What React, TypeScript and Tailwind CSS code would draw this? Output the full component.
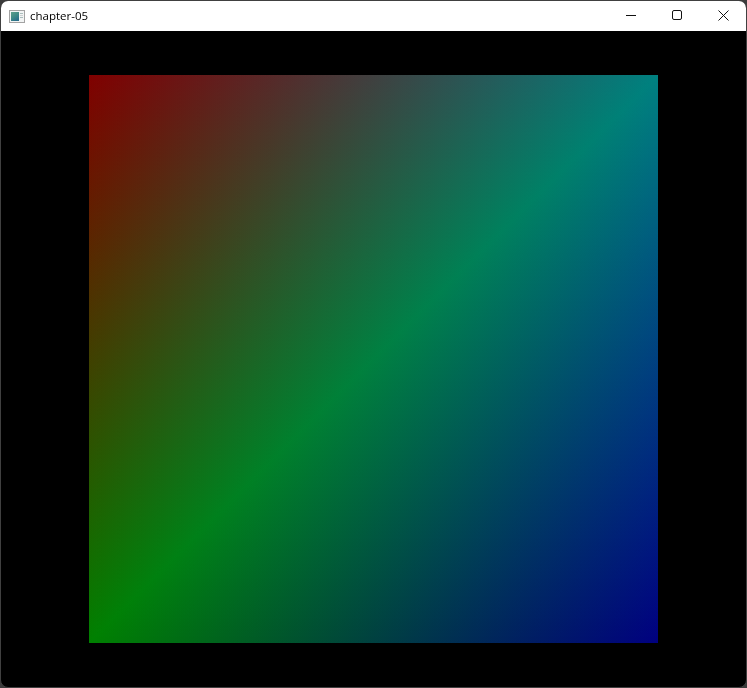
function AppIcon() {
  return (
    <svg width="16" height="13" viewBox="0 0 16 13" className="shrink-0">
      <defs>
        <linearGradient id="icon-fill" x1="0" y1="0" x2="0.6" y2="1">
          <stop offset="0" stopColor="#5f9f8c" />
          <stop offset="0.55" stopColor="#3f8a86" />
          <stop offset="1" stopColor="#2a6f8a" />
        </linearGradient>
      </defs>
      <rect x="0.5" y="0.5" width="15" height="12" fill="#f2f4f4" stroke="#a3a3a3" />
      <rect x="2" y="2" width="8" height="9" fill="url(#icon-fill)" />
      <rect x="11" y="3" width="3" height="1" fill="#a9bcbc" />
      <rect x="11" y="5" width="3" height="1" fill="#cdd2d2" />
      <rect x="11" y="7" width="3" height="1" fill="#a9bcbc" />
    </svg>
  );
}

function TitleButtons() {
  return (
    <div className="flex h-full pb-[2px]">
      <div className="w-[46px] flex items-center justify-center">
        <svg width="10" height="10" viewBox="0 0 10 10">
          <path d="M0 5.5H10" stroke="#111" fill="none" />
        </svg>
      </div>
      <div className="w-[46px] flex items-center justify-center">
        <svg width="10" height="10" viewBox="0 0 10 10">
          <rect x="0.5" y="0.5" width="9" height="9" rx="1.5" stroke="#111" fill="none" />
        </svg>
      </div>
      <div className="w-[46px] flex items-center justify-center">
        <svg width="11" height="11" viewBox="0 0 11 11">
          <path d="M0.5 0.5L10.5 10.5M10.5 0.5L0.5 10.5" stroke="#111" fill="none" />
        </svg>
      </div>
    </div>
  );
}

// vertex colours are added up per triangle, like the interpolated quad from the GL sample
function Quad() {
  const w = 569;
  const h = 568;
  return (
    <svg width={w} height={h} viewBox={`0 0 ${w} ${h}`} className="block isolate" shapeRendering="crispEdges">
      <defs>
        <linearGradient id="tl" gradientUnits="userSpaceOnUse" x1="0" y1="0" x2={w / 2} y2={h / 2}>
          <stop offset="0" stopColor="#800000" />
          <stop offset="1" stopColor="#000000" />
        </linearGradient>
        <linearGradient id="tr-a" gradientUnits="userSpaceOnUse" x1="0" y1="0" x2={w} y2="0">
          <stop offset="0" stopColor="#000000" />
          <stop offset="1" stopColor="#008080" />
        </linearGradient>
        <linearGradient id="bl-a" gradientUnits="userSpaceOnUse" x1="0" y1="0" x2="0" y2={h}>
          <stop offset="0" stopColor="#000000" />
          <stop offset="1" stopColor="#008000" />
        </linearGradient>
        <linearGradient id="br" gradientUnits="userSpaceOnUse" x1={w / 2} y1={h / 2} x2={w} y2={h}>
          <stop offset="0" stopColor="#000000" />
          <stop offset="1" stopColor="#000080" />
        </linearGradient>
        <linearGradient id="tr-b" gradientUnits="userSpaceOnUse" x1="0" y1="0" x2="0" y2={h}>
          <stop offset="0" stopColor="#008080" />
          <stop offset="1" stopColor="#000000" />
        </linearGradient>
        <linearGradient id="bl-b" gradientUnits="userSpaceOnUse" x1="0" y1="0" x2={w} y2="0">
          <stop offset="0" stopColor="#008000" />
          <stop offset="1" stopColor="#000000" />
        </linearGradient>
      </defs>
      <g className="isolate">
        <polygon points={`0,0 ${w},0 0,${h}`} fill="url(#tl)" className="mix-blend-plus-lighter" />
        <polygon points={`0,0 ${w},0 0,${h}`} fill="url(#tr-a)" className="mix-blend-plus-lighter" />
        <polygon points={`0,0 ${w},0 0,${h}`} fill="url(#bl-a)" className="mix-blend-plus-lighter" />
      </g>
      <g className="isolate">
        <polygon points={`${w},${h} ${w},0 0,${h}`} fill="url(#br)" className="mix-blend-plus-lighter" />
        <polygon points={`${w},${h} ${w},0 0,${h}`} fill="url(#tr-b)" className="mix-blend-plus-lighter" />
        <polygon points={`${w},${h} ${w},0 0,${h}`} fill="url(#bl-b)" className="mix-blend-plus-lighter" />
      </g>
    </svg>
  );
}

export default function App() {
  return (
    <div className="w-[747px] h-[688px] bg-[#3c3c3c] overflow-hidden">
      <div className="w-full h-full flex flex-col rounded-lg overflow-hidden border border-[#404040] bg-black">
        <div className="h-[30px] shrink-0 bg-white flex items-center justify-between">
          <div className="flex items-center pl-2 gap-[5px] text-[11.5px] text-black font-['Open_Sans',sans-serif]">
            <AppIcon />
            <span>chapter-05</span>
          </div>
          <TitleButtons />
        </div>
        <div className="flex-1 flex items-center justify-center">
          <Quad />
        </div>
      </div>
    </div>
  );
}
